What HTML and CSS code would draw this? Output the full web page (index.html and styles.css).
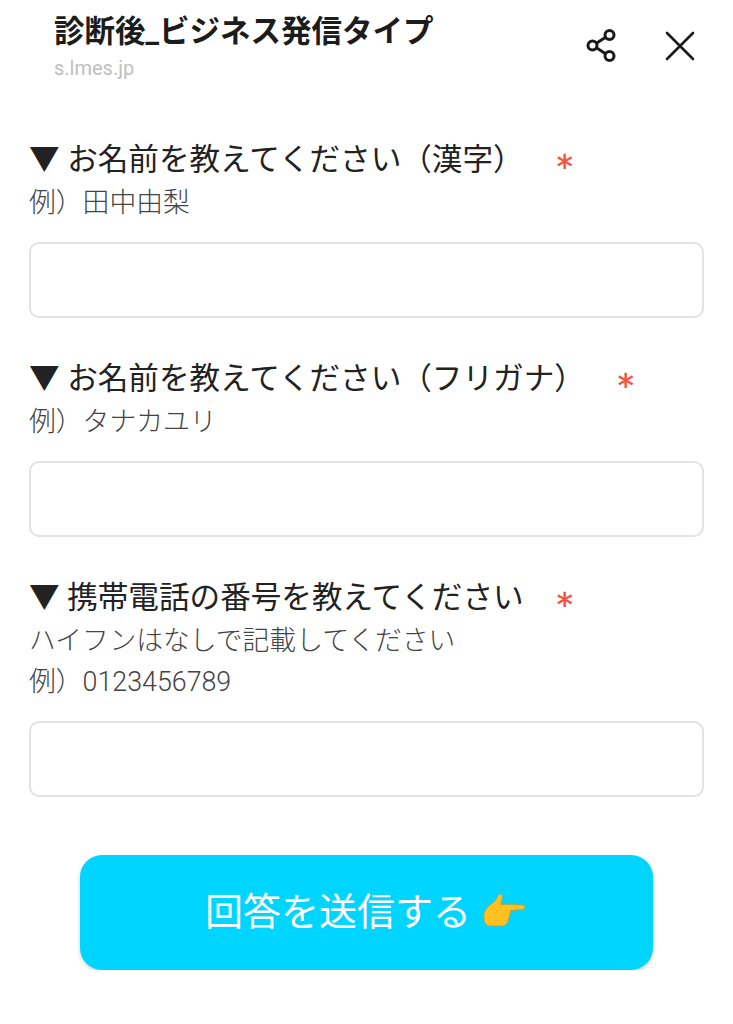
FILE: index.html
```html
<!DOCTYPE html>
<html lang="ja">
<head>
    <meta charset="UTF-8">
    <meta name="viewport" content="width=device-width, initial-scale=1.0">
    <title>診断後_ビジネス発信タイプ</title>
    <link rel="stylesheet" href="styles.css">
</head>
<body>

    <header class="topbar">
        <div class="topbar-text">
            <div class="page-title">診断後_ビジネス発信タイプ</div>
            <div class="page-host">s.lmes.jp</div>
        </div>
        <div class="topbar-icons">
            <svg class="icon-share" width="31" height="36" viewBox="0 0 31 36" fill="none" stroke="#1a1a1a" stroke-width="3">
                <circle cx="6.500" cy="17.500" r="4.500"/>
                <circle cx="23.500" cy="7" r="4.500"/>
                <circle cx="23.500" cy="28" r="4.500"/>
                <path d="M10.400 15.200 L19.600 9.300 M10.400 19.800 L19.600 25.700"/>
            </svg>
            <svg class="icon-close" width="32" height="32" viewBox="0 0 32 32" fill="none" stroke="#1a1a1a" stroke-width="2.600" stroke-linecap="round">
                <path d="M3 3 L29 29 M29 3 L3 29"/>
            </svg>
        </div>
    </header>

    <form class="form">
        <div class="field field-kanji">
            <div class="field-label">▼ お名前を教えてください（漢字）<span class="required">*</span></div>
            <div class="field-note">例）田中由梨</div>
            <input class="field-input" type="text">
        </div>

        <div class="field field-kana">
            <div class="field-label">▼ お名前を教えてください（フリガナ）<span class="required">*</span></div>
            <div class="field-note">例）タナカユリ</div>
            <input class="field-input" type="text">
        </div>

        <div class="field field-phone">
            <div class="field-label">▼ 携帯電話の番号を教えてください<span class="required">*</span></div>
            <div class="field-note">ハイフンはなしで記載してください</div>
            <div class="field-note">例）0123456789</div>
            <input class="field-input" type="text">
        </div>

        <button class="submit-btn" type="button">
            回答を送信する
            <svg class="hand" width="43" height="36" viewBox="0 0 46 38">
                <path fill="#ffc122" stroke="#d8962a" stroke-width="0.800" d="M1 24 C1 18 6 14 11 10 C15 7 15 4 17 1.500 C19 0 21 2 20.500 5 C20 8 19 10 19 12 L42 12.500 C45.500 13 45.500 17 42 17.500 L29 18.500 C30 20 29.500 22 28 22.500 C29 24 28.500 26.500 27 27 C27.500 29 27 31 25.500 31.500 C25 33.500 23 35 20 35 L8 35 C3 35 1 31 1 24 Z"/>
            </svg>
        </button>
    </form>

</body>
</html>
```

FILE: styles.css
```css
* {
    box-sizing: border-box;
}

body {
    margin: 0;
    background: #fff;
    color: #222;
    font-family: Roboto, "Noto Sans CJK JP", sans-serif;
}

/* top bar */
.topbar {
    display: flex;
    justify-content: space-between;
    height: 143px;
    padding: 12px 37px 0 54px;
}

.page-title {
    font-size: 30.500px;
    font-weight: 700;
    line-height: 40px;
    color: #1c1c1c;
}

.page-host {
    font-size: 20px;
    line-height: 32px;
    color: #c0c0c0;
}

.topbar-icons {
    display: flex;
    align-items: center;
    gap: 47px;
    height: 67px;
}

/* form */
.form {
    padding: 0 29px;
}

.field {
    margin-bottom: 44px;
}

.field-label {
    height: 34px;
    font-size: 30.600px;
    line-height: 34px;
    color: #222;
    white-space: nowrap;
}

.required {
    margin-left: 33px;
    font-family: "DejaVu Sans", sans-serif;
    font-size: 32px;
    line-height: 0;
    vertical-align: -7px;
    color: #f4523b;
    -webkit-text-stroke: 0.6px #f4523b;
}

.field-note {
    margin-top: 1px;
    font-size: 26.800px;
    line-height: 40px;
    color: #444;
    font-weight: 300;
}

.field-label + .field-note {
    margin-top: 6px;
}

.field-input {
    display: block;
    width: 100%;
    height: 76px;
    margin-top: 19px;
    background: #fff;
    border: 2px solid #e2e2e2;
    border-radius: 10px;
}

.submit-btn {
    display: flex;
    align-items: center;
    justify-content: center;
    gap: 12px;
    width: 573px;
    height: 115px;
    margin: 58px 0 0 51px;
    padding: 0 2px 8px 0;
    background: #00d5ff;
    border: none;
    border-radius: 22px;
    box-shadow: 0 2px 4px rgba(0, 0, 0, 0.18);
    color: #fff;
    font-family: Roboto, "Noto Sans CJK JP", sans-serif;
    font-size: 38px;
}

.hand {
    margin-top: 4px;
}
```
